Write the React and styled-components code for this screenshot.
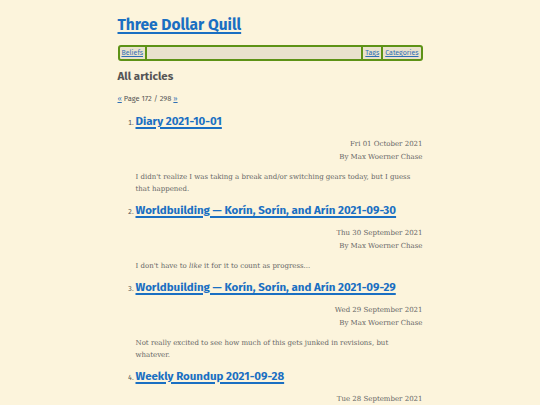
import React from "react";
import styled, { createGlobalStyle } from "styled-components";

const Global = createGlobalStyle`
  html, body { margin: 0; padding: 0; background: #fcf4dc; }
  body { font-family: "DejaVu Serif", serif; color: #555; }
`;

const Page = styled.div`
  width: 305px;
  margin: 0 auto;
  padding-top: 15px;
`;

const SiteTitle = styled.h1`
  margin: 0;
  font-family: "Fira Sans", "Lato", sans-serif;
  font-size: 15.5px;
  font-weight: 700;
  line-height: 20px;
  a { color: #1a6fc2; text-decoration: underline; text-decoration-thickness: 2px; text-underline-offset: 2px; }
`;

const Nav = styled.nav`
  margin-top: 10px;
  display: flex;
  align-items: stretch;
  border: 2px solid #5d9216;
  border-radius: 3px;
  background: #e9e2cd;
  height: 12px;
  font-family: "Fira Sans", "Lato", sans-serif;
  font-size: 7px;
  line-height: 12px;
`;

const NavItem = styled.a`
  color: #2f6fb5;
  text-decoration: underline;
  padding: 0 2px;
  border-left: ${p => (p.$first ? "none" : "2px solid #5d9216")};
  border-right: ${p => (p.$first ? "2px solid #5d9216" : "none")};
`;

const Spacer = styled.div`
  flex: 1;
`;

const Heading = styled.h2`
  margin: 8px 0 0;
  font-family: "Fira Sans", "Lato", sans-serif;
  font-size: 11.5px;
  font-weight: 700;
  color: #555;
  line-height: 14px;
`;

const Pager = styled.div`
  margin-top: 11px;
  font-family: "Fira Sans", "Lato", sans-serif;
  font-size: 7.5px;
  line-height: 10px;
  color: #555;
  a { color: #2f6fb5; }
`;

const List = styled.ol`
  margin: 7px 0 0;
  padding-left: 18px;
  font-family: "Fira Sans", "Lato", sans-serif;
`;

const Item = styled.li`
  font-size: 7px;
  line-height: 20px;
  margin-bottom: 5px;
  &::marker { color: #555; }
`;

const ItemTitle = styled.h3`
  display: inline;
  margin: 0;
  font-size: 11.5px;
  font-weight: 700;
  line-height: 20px;
  a { color: #1a6fc2; text-decoration-thickness: 1.5px; text-underline-offset: 1.5px; }
`;

const Meta = styled.div`
  margin-top: 5px;
  text-align: right;
  font-family: "DejaVu Serif", serif;
  font-size: 7px;
  line-height: 13px;
  color: #666;
`;

const Summary = styled.p`
  margin: 7px 0 0;
  font-family: "DejaVu Serif", serif;
  font-size: 7px;
  line-height: 12px;
  color: #666;
  padding-right: 6px;
`;

const articles = [
  { title: "Diary 2021-10-01", date: "Fri 01 October 2021", summary: <>I didn't realize I was taking a break and/or switching gears today, but I guess that happened.</> },
  { title: "Worldbuilding — Korín, Sorín, and Arín 2021-09-30", date: "Thu 30 September 2021", summary: <>I don't have to <em>like</em> it for it to count as progress...</> },
  { title: "Worldbuilding — Korín, Sorín, and Arín 2021-09-29", date: "Wed 29 September 2021", summary: <>Not really excited to see how much of this gets junked in revisions, but whatever.</> },
  { title: "Weekly Roundup 2021-09-28", date: "Tue 28 September 2021", summary: <>Not too much going on.</> },
];

export default function App() {
  return (
    <>
      <Global />
      <Page>
        <SiteTitle><a href="#">Three Dollar Quill</a></SiteTitle>
        <Nav>
          <NavItem $first href="#">Beliefs</NavItem>
          <Spacer />
          <NavItem href="#">Tags</NavItem>
          <NavItem href="#">Categories</NavItem>
        </Nav>
        <Heading>All articles</Heading>
        <Pager><a href="#">«</a> Page 172 / 298 <a href="#">»</a></Pager>
        <List>
          {articles.map((a, i) => (
            <Item key={i}>
              <ItemTitle><a href="#">{a.title}</a></ItemTitle>
              <Meta>{a.date}<br />By Max Woerner Chase</Meta>
              <Summary>{a.summary}</Summary>
            </Item>
          ))}
        </List>
      </Page>
    </>
  );
}
